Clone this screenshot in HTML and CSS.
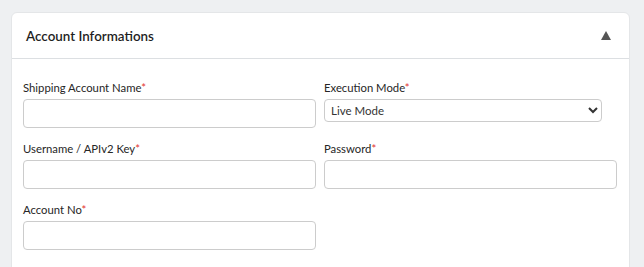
FILE: index.html
```html
<!DOCTYPE html>
<html lang="en">
<head>
    <meta charset="UTF-8">
    <meta name="viewport" content="width=device-width, initial-scale=1.0">
    <title>Account Informations</title>
    <link rel="stylesheet" href="styles.css">
</head>
<body>

    <div class="card">
        <div class="card-header">
            <h3>Account Informations</h3>
            <span class="toggle"></span>
        </div>
        <div class="card-body">
            <div class="field">
                <label>Shipping Account Name<span class="req">*</span></label>
                <input type="text">
            </div>
            <div class="field">
                <label>Execution Mode<span class="req">*</span></label>
                <select>
                    <option>Live Mode</option>
                    <option>Test Mode</option>
                </select>
            </div>
            <div class="field">
                <label>Username / APIv2 Key<span class="req">*</span></label>
                <input type="text">
            </div>
            <div class="field">
                <label>Password<span class="req">*</span></label>
                <input type="password">
            </div>
            <div class="field">
                <label>Account No<span class="req">*</span></label>
                <input type="text">
            </div>
        </div>
    </div>

</body>
</html>
```

FILE: styles.css
```css
html, body { height: 267px; overflow: hidden; }
body { margin: 0; padding: 12px 14px 0 11px; background: #eef0f2; font-family: Lato, "Open Sans", Arial, sans-serif; color: #222; }
.card { background: #fff; border: 1px solid #e4e6e8; border-radius: 6px; }
.card-header { display: flex; align-items: center; justify-content: space-between; height: 45px; padding: 0 18px 0 14px; border-bottom: 1px solid #dcdfe2; }
.card-header h3 { margin: 0; font-size: 13.4px; font-weight: 600; color: #1f1f1f; }
.toggle { width: 0; height: 0; border-left: 5px solid transparent; border-right: 5px solid transparent; border-bottom: 9px solid #555; }
.card-body { display: grid; grid-template-columns: 293px 293px; column-gap: 8px; row-gap: 13px; padding: 21px 0 30px 11px; }
.field label { display: block; font-size: 11.3px; margin-bottom: 3px; line-height: 16px; color: #262626; }
.req { color: #e3342f; }
input, select { box-sizing: border-box; border: 1px solid #ccc; border-radius: 4px; background: #fff; font-family: inherit; }
input { width: 100%; height: 29px; }
select { width: 278px; height: 23px; font-size: 11.5px; color: #333; padding: 0 2px; }
```
